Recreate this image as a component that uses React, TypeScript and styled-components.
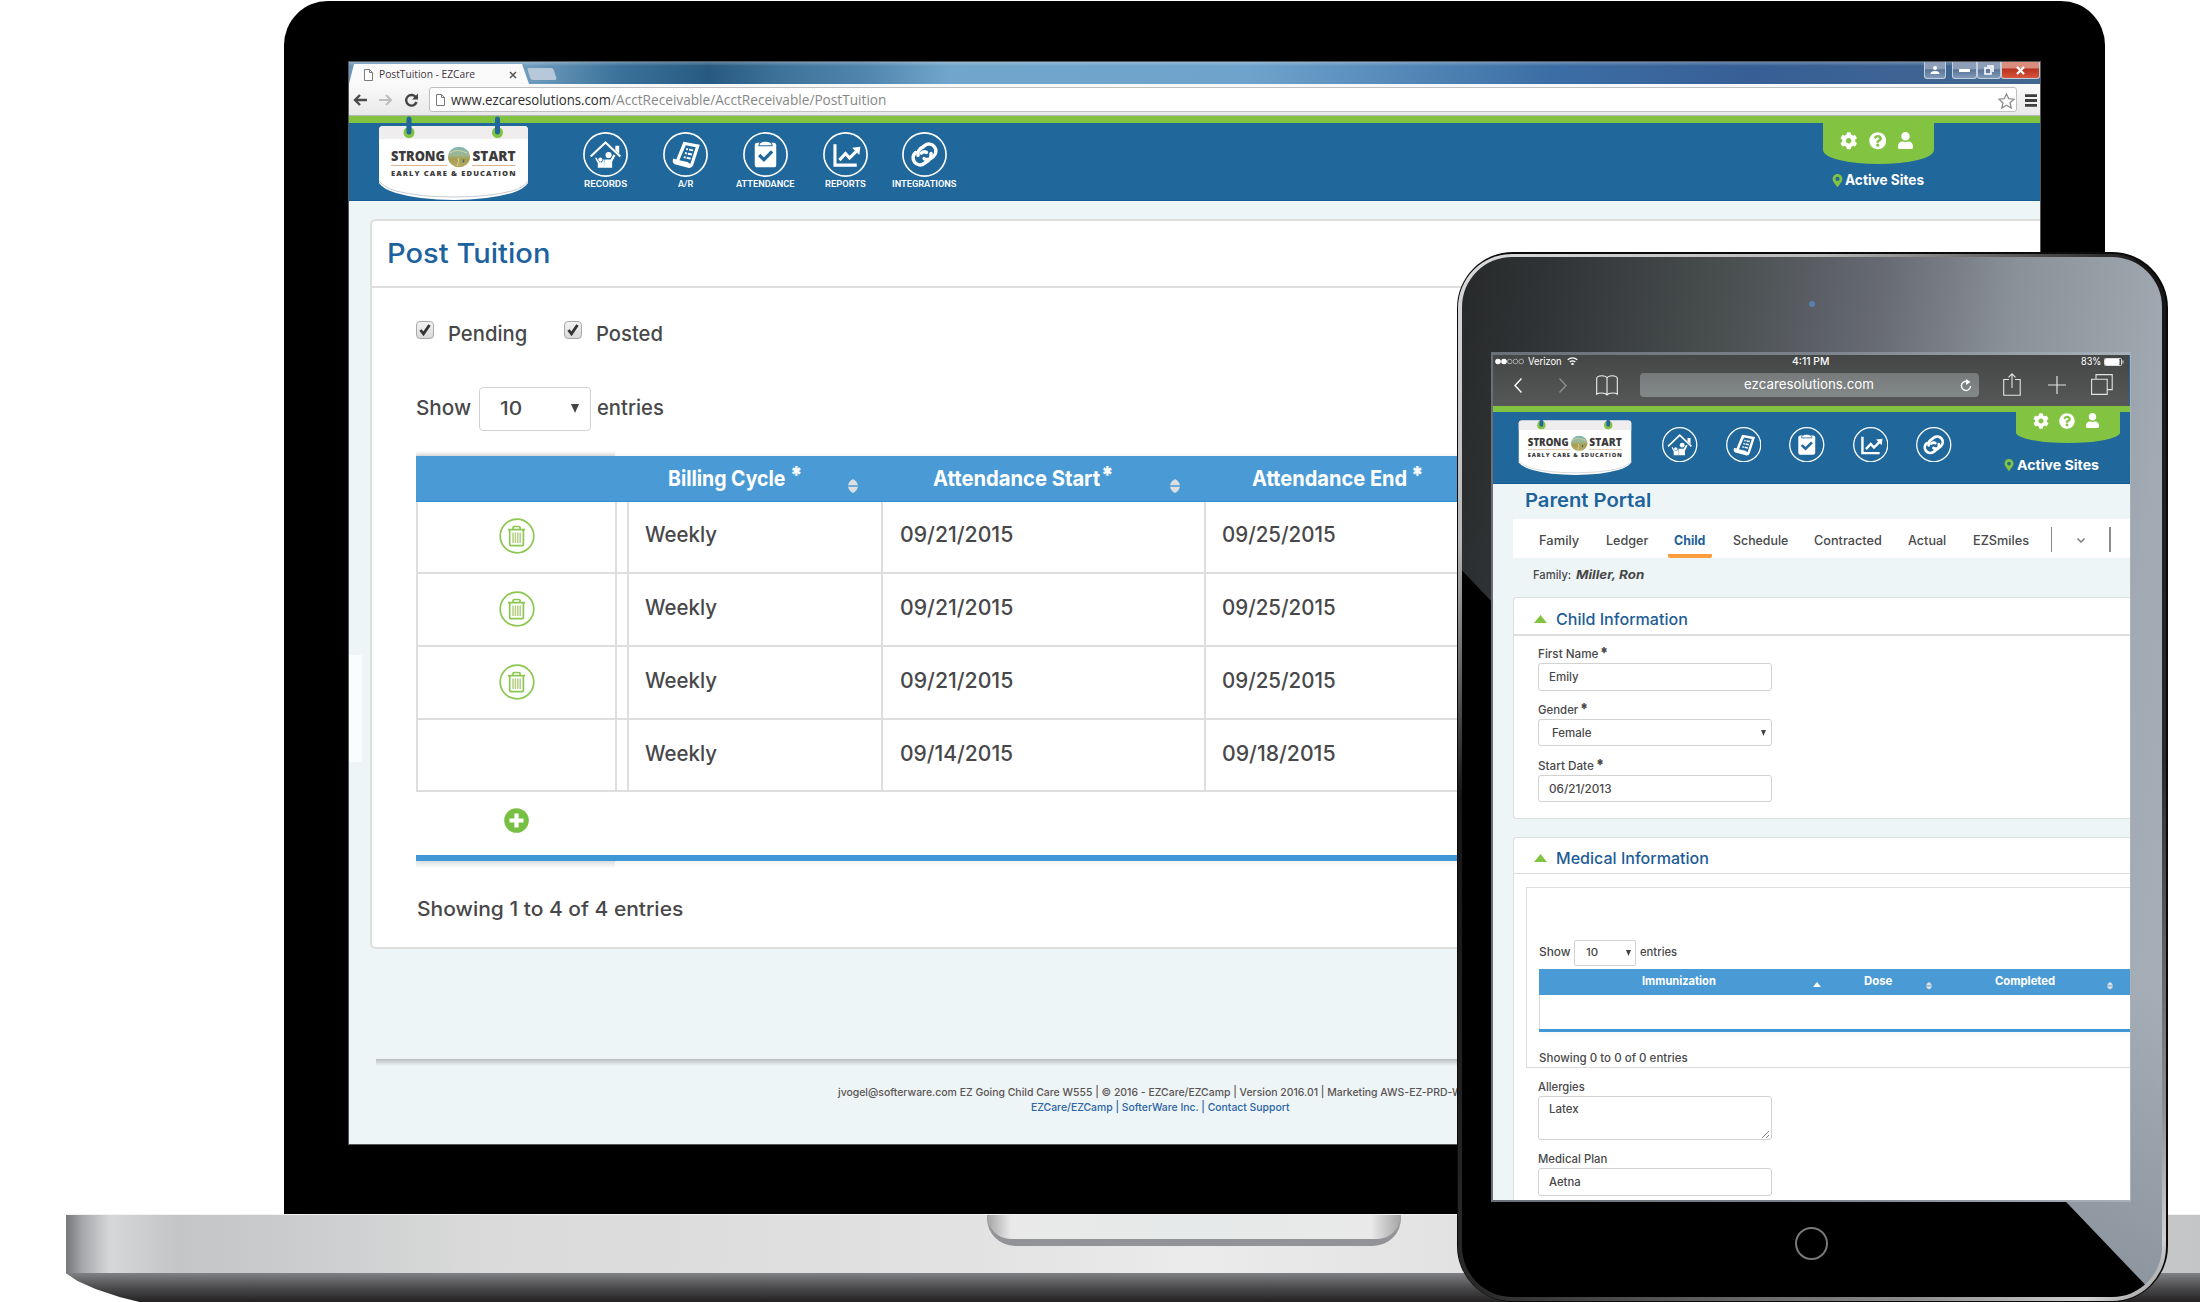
import React, { useLayoutEffect, useRef, useState } from "react";
import styled, { createGlobalStyle } from "styled-components";
import { FaCog, FaQuestionCircle, FaUser, FaMapMarkerAlt } from "react-icons/fa";

const blue = "#20679c";
const green = "#82c341";
const sky = "#4a9bd5";
const mist = "#eef5f6";
const ink = "#48484a";
const line = "#dededd";
const body = `Inter, "Open Sans", "Liberation Sans", sans-serif`;
const ui = `"Open Sans", sans-serif`;

const Global = createGlobalStyle`
  html, body { margin: 0; padding: 0; background: #fff; }
  * { box-sizing: border-box; }
  svg { display: block; flex: none; }
`;

/* ---------- text ---------- */

interface LabelProps {
  children: React.ReactNode;
  w: number;
  size: number;
  drop?: number;
  left?: number;
  weight?: number;
  color?: string;
  italic?: boolean;
  font?: string;
}

const LabelBox = styled.div<{ $w: number; $size: number; $drop: number; $left: number; $weight: number; $color: string; $italic: boolean; $font: string }>`
  flex: none;
  width: ${(p) => p.$w}px;
  height: ${(p) => p.$size}px;
  margin-top: ${(p) => p.$drop - p.$size * (p.$font === body ? 0.825 : 0.863)}px;
  margin-left: ${(p) => p.$left}px;
  font: ${(p) => (p.$italic ? "italic " : "")}${(p) => p.$weight} ${(p) => p.$size}px/${(p) => p.$size}px ${(p) => p.$font};
  color: ${(p) => p.$color};
  white-space: pre;
`;
const Stretch = styled.span`
  display: inline-block;
  transform-origin: 0 0;
  vertical-align: top;
`;

/* Text set to an exact width: `drop` is the baseline's distance from the row's top. */
function Label({ children, w, size, drop = 0, left = 0, weight = 500, color = ink, italic = false, font = body }: LabelProps) {
  const ref = useRef<HTMLSpanElement>(null);
  const [k, setK] = useState(1);
  useLayoutEffect(() => {
    if (ref.current && ref.current.offsetWidth) setK(w / ref.current.offsetWidth);
  }, [w, size, weight]);
  return (
    <LabelBox $w={w} $size={size} $drop={drop} $left={left} $weight={weight} $color={color} $italic={italic} $font={font}>
      <Stretch ref={ref} style={{ transform: `scaleX(${k})` }}>{children}</Stretch>
    </LabelBox>
  );
}

/* ---------- shared pieces ---------- */

const Row = styled.div<{ $h: number; $pl?: number }>`
  display: flex;
  flex: none;
  align-items: flex-start;
  height: ${(p) => p.$h}px;
  padding-left: ${(p) => p.$pl ?? 0}px;
`;
const Nudge = styled.div<{ $x?: number; $y?: number }>`
  flex: none;
  margin: ${(p) => p.$y ?? 0}px 0 0 ${(p) => p.$x ?? 0}px;
`;
const Rule = styled.div<{ $h: number; $color: string }>`
  flex: none;
  height: ${(p) => p.$h}px;
  background: ${(p) => p.$color};
`;

const Badge = ({ width, height, hook }: { width: number; height: number; hook: number }) => (
  <svg width={width} height={height} viewBox="0 0 151 84" preserveAspectRatio="none">
    <defs>
      <linearGradient id="ball" x1="0" y1="0" x2="0" y2="1">
        <stop offset="0" stopColor="#7fb4b5" />
        <stop offset=".4" stopColor="#9db894" />
        <stop offset=".6" stopColor="#a89d4e" />
        <stop offset="1" stopColor="#b7ab6b" />
      </linearGradient>
    </defs>
    <path d="M1 14q0-4 4-4h141q4 0 4 4v53q-4 6-16 10q-24 7-58 7t-58-7Q5 73 1 67z" fill="#fff" />
    <path d="M1 14q0-4 4-4h141q4 0 4 4v9H1z" fill="#efedee" />
    <path d="M1 65q6 7 17 10q24 6 58 6t58-6q11-3 16-10" fill="none" stroke="#c9ccd2" strokeWidth="1" />
    {[31, 119.5].map((x) => (
      <g key={x}>
        <circle cx={x} cy="16.500" r="5.500" fill={green} />
        <path d={`M${x} ${hook}V16`} stroke={blue} strokeWidth="5" strokeLinecap="round" />
      </g>
    ))}
    <g fontFamily={`"Open Sans", Lato, sans-serif`} fontWeight="800" fill="#3c3a3b">
      <text x="13" y="44.500" fontSize="13.800" textLength="54" lengthAdjust="spacingAndGlyphs">STRONG</text>
      <text x="94.500" y="44.500" fontSize="13.800" textLength="43" lengthAdjust="spacingAndGlyphs">START</text>
      <text x="13" y="59.500" fontSize="7.600" textLength="124.500" lengthAdjust="spacing">EARLY CARE &amp; EDUCATION</text>
    </g>
    <path d="M13 49.500h56M94 49.500h43.500" stroke="#dcb594" strokeWidth="1" />
    <ellipse cx="81" cy="41" rx="11" ry="10.300" fill="url(#ball)" />
    <path d="M72 37q7-5 17 0M79 50q3-5 1-8" fill="none" stroke="#d8d9a0" strokeWidth="1" />
    <path d="M85.500 43.500v3" stroke="#3d6c79" strokeWidth="1.500" />
  </svg>
);

type NavName = "records" | "ar" | "attendance" | "reports" | "integrations";
const glyphs: Record<NavName, React.ReactNode> = {
  records: (
    <>
      <path d="M7.500 24 22 10.200 36.500 24" fill="none" stroke="#fff" strokeWidth="2" />
      <path d="M31.600 13.500h3.800v7.800l-3.800-3.500z" />
      <circle cx="25" cy="22.500" r="3" />
      <path d="M21 27h6l2.800-5 1.900.9-3.200 6.300V35h-8z" />
      <circle cx="17" cy="27" r="2" />
      <path d="m11.800 25.500 1.200-.6 3 4.600h2.500l2-3.300v8.800h-6v-4.500z" />
    </>
  ),
  ar: (
    <>
      <path d="m20 9.500 16 3-6.500 20q-1.500 3.500-5 2.500l-13-3.500q-3-1.500-1.500-5.500l3 .8z" />
      <path d="m22.300 13 9.700 1.800-5.300 16.500-2.700-2-8-1.800z" fill={blue} />
      <path d="m22.700 16.600 1.800.4m1 .2 4 .8M21.500 20.600l1.800.4m1 .2 4 .8M20.300 24.600l1.800.4m1 .2 4 .8" stroke="#fff" strokeWidth="1.900" />
    </>
  ),
  attendance: (
    <>
      <rect x="11.500" y="10.500" width="21" height="24" rx="2.500" />
      <path d="M15.500 13.500q0-4 6.500-4.600 6.500.6 6.500 4.600z" stroke={blue} strokeWidth="1" />
      <path d="m15.800 22.500 4.700 4.500 8-8" fill="none" stroke={blue} strokeWidth="3.200" />
    </>
  ),
  reports: (
    <>
      <path d="M11.700 12v20.400H33" fill="none" stroke="#fff" strokeWidth="3" />
      <path d="m16 27.500 6-6.500 4 4.500 7-7" fill="none" stroke="#fff" strokeWidth="3" />
      <path d="M28.500 15.500 36.500 14.500 35.500 22.500z" />
    </>
  ),
  integrations: (
    <g fill="none" transform="translate(22 22) rotate(-38)" stroke="#fff" strokeWidth="3.400" strokeLinecap="round">
      <path d="M-5.500 -3.200A7.400 6.800 0 0 1 3 -6.800h2.500a6.800 6.800 0 0 1 0 13.600H2.500A6.300 6.300 0 0 1 -2.800 3" />
      <path d="M5.500 3.200A7.400 6.800 0 0 1 -3 6.800h-2.500a6.800 6.800 0 0 1 0 -13.600" />
      <path d="M2.800 -.5A4.500 4.500 0 0 0 -1.500 -3" />
    </g>
  ),
};
const NavIcon = ({ name, size }: { name: NavName; size: number }) => (
  <svg width={size} height={size} viewBox="0 0 44 44" fill="#fff">
    <circle cx="22" cy="22" r="21.100" fill="none" stroke="#fff" strokeWidth="1.600" />
    {glyphs[name]}
  </svg>
);

const UserTab = styled.div<{ $w: number; $h: number; $gap: number; $pt: number }>`
  display: flex;
  justify-content: center;
  align-items: flex-start;
  gap: ${(p) => p.$gap}px;
  width: ${(p) => p.$w}px;
  height: ${(p) => p.$h}px;
  padding: ${(p) => p.$pt}px 3px 0 0;
  background: ${green};
  border-radius: 0 0 50% 50% / 0 0 34% 34%;
  color: #fff;
`;

const Sorter = ({ w = 10, h = 14 }: { w?: number; h?: number }) => (
  <svg width={w} height={h} viewBox="0 0 9 14" preserveAspectRatio="none">
    <path d="M4.500 0Q8 2 9 6.300H0Q1 2 4.500 0zM0 7.700h9Q8 12 4.500 14 1 12 0 7.700z" fill="#dcdee0" />
  </svg>
);

const Box = styled.div<{ $w: number; $h: number; $r?: number; $b?: number }>`
  display: flex;
  flex: none;
  align-items: flex-start;
  width: ${(p) => p.$w}px;
  height: ${(p) => p.$h}px;
  border: ${(p) => p.$b ?? 1.5}px solid #d2d2d2;
  border-radius: ${(p) => p.$r ?? 4}px;
  background: #fff;
`;

/* ---------- laptop ---------- */

const Stage = styled.div`
  position: relative;
  width: 2200px;
  height: 1302px;
  overflow: hidden;
  background: #fff;
`;
const Lid = styled.div`
  position: absolute;
  left: 284px;
  top: 1px;
  width: 1821px;
  height: 1213px;
  padding: 61px 65px 70px;
  background: #000;
  border-radius: 44px 44px 0 0;
`;
const Screen = styled.div`
  display: flex;
  flex-direction: column;
  width: 1691px;
  height: 1082px;
  overflow: hidden;
  background: ${mist};
  box-shadow: 0 0 0 1px #55585a;
`;
const Base = styled.div`
  position: absolute;
  left: 65.5px;
  top: 1214px;
  width: 2135px;
`;
const Deck = styled.div`
  display: flex;
  height: 59px;
  padding-left: 921px;
  border-top: 1px solid #f2f2f2;
  background: linear-gradient(90deg, #77777c 0, #a9abae 18px, #d6d7d9 44px, #c4c5c7 110px, #c9cacc 200px, #d9dad9 420px, #dddddd 640px, #e2e2e3 900px, #ebebeb 1130px, #e2e2e2 1400px, #d0d0d2 1800px, #c4c5c7 2134px);
`;
const Notch = styled.div`
  width: 414px;
  height: 31px;
  padding-bottom: 7px;
  background: #929397;
  border-radius: 0 0 28px 28px;
`;
const NotchFace = styled.div`
  height: 24px;
  border-radius: 0 0 24px 24px;
  background: linear-gradient(90deg, #a4a4a6 0, #e9e9e9 24px, #e6e9e9 50%, #e9e9e9 384px, #a4a4a6 100%);
`;
const Underside = styled.div`
  height: 30px;
  background: linear-gradient(#808184, #4a4a4c 50%, #211f20);
  clip-path: polygon(0 0, 12px 8px, 30px 16px, 54px 24px, 78px 30px, 100% 30px, 100% 0);
`;

const TitleBar = styled.div`
  display: flex;
  flex: none;
  height: 22px;
  background:
    linear-gradient(180deg, rgba(255, 255, 255, 0.25) 0, rgba(255, 255, 255, 0) 4px),
    linear-gradient(90deg, #6c94b6 0, #6f9cbd 180px, #3b729a 270px, #285a81 360px, #3f7299 430px, #5286ae 520px, #72a5cb 600px, #6fa3cb 900px, #3c6ea5 1200px, #375f96 1400px, #42688f 1691px);
`;
const BrowserTab = styled.div`
  display: flex;
  align-items: flex-start;
  width: 180px;
  height: 20px;
  margin-top: 2px;
  background: #fafafa;
  clip-path: polygon(5px 0, 173px 0, 180px 100%, 0 100%);
`;
const NewTab = styled.div`
  width: 26px;
  height: 12px;
  margin: 6px 0 0 0;
  background: #b7c8da;
  transform: skewX(18deg);
  border-radius: 2px;
`;
const WinButtons = styled.div`
  display: flex;
  margin-left: auto;
`;
const WinButton = styled.div<{ $w: number; $red?: boolean; $ml?: number }>`
  display: flex;
  justify-content: center;
  align-items: center;
  width: ${(p) => p.$w}px;
  height: 17px;
  margin-left: ${(p) => p.$ml ?? 0}px;
  border: 1px solid #c3cedb;
  border-top: 0;
  border-radius: 0 0 3px 3px;
  background: ${(p) => (p.$red ? "linear-gradient(#d98d7c 0 35%, #b93320 45%, #d8563c)" : "linear-gradient(#8d9fb8 0 40%, #5b7597 50%, #7f9abb)")};
`;
const ToolBar = styled.div`
  display: flex;
  flex: none;
  align-items: flex-start;
  height: 32px;
  background: linear-gradient(#fafafa, #e9e9e9);
  border-bottom: 1px solid #b5b5b5;
`;
const UrlBox = styled.div`
  display: flex;
  width: 1588px;
  height: 25px;
  margin: 3px 0 0 10px;
  border: 1px solid #bfbfbf;
  border-radius: 3px;
  background: #fff;
`;
const Header = styled.div<{ $h: number }>`
  display: flex;
  flex: none;
  height: ${(p) => p.$h}px;
  background: ${blue};
  border-bottom: 1px solid #125b93;
`;
const NavItem = styled.div<{ $w: number }>`
  display: flex;
  flex: none;
  flex-direction: column;
  align-items: center;
  width: ${(p) => p.$w}px;
`;
const Account = styled.div<{ $w: number; $x: number }>`
  display: flex;
  flex-direction: column;
  width: ${(p) => p.$w}px;
  margin-left: ${(p) => p.$x}px;
`;
const Card = styled.div<{ $h: number }>`
  flex: none;
  height: ${(p) => p.$h}px;
  border: 2px solid ${line};
  border-right: 0;
  border-radius: 6px 0 0 6px;
  background: #fff;
`;
const DeskPage = styled.div`
  position: relative;
  flex: 1;
  padding: 18px 0 0 21px;
  &::before {
    content: "";
    position: absolute;
    left: 0;
    top: 454px;
    width: 13px;
    height: 107px;
    background: #fafdfd;
  }
`;
const Check = styled.div`
  display: flex;
  align-items: center;
  justify-content: center;
  width: 18px;
  height: 18px;
  border: 1px solid #a9a9a9;
  border-radius: 4px;
  background: linear-gradient(#f3f3f3, #d9d9d9);
`;
const Grid = styled.div`
  margin-left: 44px;
`;
const HeadRow = styled.div`
  display: flex;
  height: 45.5px;
  background: ${sky};
  border-bottom: 1px solid #2f8fd4;
  box-shadow: 0 -3px 3px -1px rgba(0, 0, 0, 0.04);
`;
const HeadShade = styled.div`
  width: 199px;
  height: 5px;
  margin: -5px 0 0 44px;
  background: linear-gradient(rgba(0, 0, 0, 0), rgba(0, 0, 0, 0.12));
`;
const FootShade = styled.div`
  width: 199px;
  height: 8px;
  background: linear-gradient(rgba(60, 80, 100, 0.13), rgba(0, 0, 0, 0));
`;
const BodyRow = styled.div<{ $h: number }>`
  display: grid;
  grid-template-columns: 198.5px 12.5px 254px 322.5px 1fr;
  height: ${(p) => p.$h}px;
  border-bottom: 2px solid ${line};
`;
const Cell = styled.div`
  display: flex;
  align-items: flex-start;
  border-left: 2px solid ${line};
`;
const BlueLine = styled.div<{ $h: number }>`
  height: ${(p) => p.$h}px;
  background: #3f97d6;
  box-shadow: 0 3px 4px rgba(60, 80, 100, 0.07);
`;
const FootRule = styled.div`
  height: 7px;
  margin: 110px 0 0 6px;
  background: linear-gradient(#b9bdbe, ${mist});
`;

const Trash = () => (
  <svg width="36" height="36" viewBox="0 0 36 36" fill="none" stroke="#8cc751" strokeWidth="1.700">
    <circle cx="18" cy="18" r="16.800" />
    <path d="M9 11.700h17M14 11v-1.200q0-1.300 1.300-1.300h4.500q1.300 0 1.300 1.300V11M10.700 12.500V26q0 1.700 1.700 1.700h10.300q1.700 0 1.700-1.700V12.500" />
    <path d="M14 14.500v10.500M16.400 14.500v10.500M18.800 14.500v10.500M21.200 14.500v10.500" stroke="#b5cf83" strokeWidth="1.500" />
  </svg>
);
const PageIcon = () => (
  <svg width="9" height="12" viewBox="0 0 9 12" fill="#fff" stroke="#7b7b7b">
    <path d="M.5.5h5l3 3v8h-8zM5.500.5v3h3" />
  </svg>
);
const Tick = () => (
  <Check>
    <svg width="12" height="12" viewBox="0 0 12 12" fill="none" stroke="#333" strokeWidth="2.800"><path d="m1.500 6 3 3.800L10.500 1" /></svg>
  </Check>
);

const deskNav: { name: NavName; text: string; w: number }[] = [
  { name: "records", text: "RECORDS", w: 43 },
  { name: "ar", text: "A/R", w: 15.5 },
  { name: "attendance", text: "ATTENDANCE", w: 58.5 },
  { name: "reports", text: "REPORTS", w: 40.5 },
  { name: "integrations", text: "INTEGRATIONS", w: 65 },
];
const rows = [
  { h: 72, drop: 40.5, start: "09/21/2015", end: "09/25/2015", trash: true },
  { h: 73, drop: 41.5, start: "09/21/2015", end: "09/25/2015", trash: true },
  { h: 73, drop: 41.5, start: "09/21/2015", end: "09/25/2015", trash: true },
  { h: 72.5, drop: 41.5, start: "09/14/2015", end: "09/18/2015", trash: false },
];

function Laptop() {
  return (
    <>
      <Lid>
        <Screen>
          <TitleBar>
            <BrowserTab>
              <Nudge $x={15} $y={5}><PageIcon /></Nudge>
              <Label w={96} size={11.5} drop={14} left={5.5} weight={400} color="#41353a" font={ui}>PostTuition - EZCare</Label>
              <Nudge $x={34} $y={7}>
                <svg width="8" height="8" viewBox="0 0 8 8" stroke="#555" strokeWidth="1.500"><path d="m1 1 6 6M7 1 1 7" /></svg>
              </Nudge>
            </BrowserTab>
            <NewTab />
            <WinButtons>
              <WinButton $w={22}>
                <svg width="12" height="10" viewBox="0 0 12 10" fill="#fff"><circle cx="6" cy="3" r="2" /><path d="M1.500 9q0-3 4.500-3t4.500 3z" /></svg>
              </WinButton>
              <WinButton $w={25} $ml={6}><svg width="11" height="4"><rect y="1" width="11" height="3" fill="#fff" /></svg></WinButton>
              <WinButton $w={24}>
                <svg width="10" height="10" viewBox="0 0 10 10" fill="none" stroke="#fff" strokeWidth="1.600"><path d="M1 3h6v6H1zM3 1h6v6" /></svg>
              </WinButton>
              <WinButton $w={39} $red>
                <svg width="9" height="9" viewBox="0 0 9 9" stroke="#fff" strokeWidth="2.300"><path d="m1 1 7 7M8 1 1 8" /></svg>
              </WinButton>
            </WinButtons>
          </TitleBar>
          <ToolBar>
            <Nudge $x={4} $y={10}>
              <svg width="14" height="12" viewBox="0 0 14 12" fill="none" stroke="#4a4a4a" strokeWidth="2.400"><path d="M14 6H2M7 1 2 6l5 5" /></svg>
            </Nudge>
            <Nudge $x={12} $y={10}>
              <svg width="14" height="12" viewBox="0 0 14 12" fill="none" stroke="#bdbdbd" strokeWidth="2"><path d="M0 6h12M7 1l5 5-5 5" /></svg>
            </Nudge>
            <Nudge $x={11} $y={9}>
              <svg width="15" height="14" viewBox="0 0 15 14" fill="none" stroke="#444" strokeWidth="2.400"><path d="M12 4.500A5.300 5.300 0 1 0 12.500 9" /><path d="M14 .5v6H8z" fill="#444" stroke="none" /></svg>
            </Nudge>
            <UrlBox>
              <Nudge $x={6} $y={6}><PageIcon /></Nudge>
              <Label w={160} size={14} drop={17.5} left={6} weight={400} color="#2d2d2d" font={ui}>www.ezcaresolutions.com</Label>
              <Label w={275} size={14} drop={17.5} weight={400} color="#878787" font={ui}>/AcctReceivable/AcctReceivable/PostTuition</Label>
              <Nudge $x={1112} $y={4.5}>
                <svg width="17" height="16" viewBox="0 0 17 16" fill="#fff" stroke="#8d8d8d" strokeWidth="1.300"><path d="m8.500 1 2.200 4.700 5.300.5-4 3.500 1.200 5.300-4.700-2.800L3.800 15 5 9.700 1 6.200l5.300-.5z" /></svg>
              </Nudge>
            </UrlBox>
            <Nudge $x={8} $y={9.5}>
              <svg width="12" height="13" stroke="#3e3e3e" strokeWidth="2.800"><path d="M0 1.700h12M0 6.500h12M0 11.300h12" /></svg>
            </Nudge>
          </ToolBar>
          <Rule $h={7} $color={green} />
          <Header $h={78}>
            <Nudge $x={28.5} $y={-7}><Badge width={151} height={84} hook={3} /></Nudge>
            <Nudge $x={37.5} />
            {deskNav.map((n) => (
              <NavItem key={n.name} $w={79.75}>
                <Nudge $y={8.5}><NavIcon name={n.name} size={45} /></Nudge>
                <Label w={n.w} size={8.8} drop={11} weight={600} color="#fff" font={`Roboto, sans-serif`}>{n.text}</Label>
              </NavItem>
            ))}
            <Account $w={111.5} $x={858}>
              <UserTab $w={111.5} $h={41} $gap={11} $pt={9}>
                <FaCog size={17.5} /><FaQuestionCircle size={17.5} /><FaUser size={17} />
              </UserTab>
              <Row $h={20} $pl={8.5}>
                <Nudge $y={9.5}><FaMapMarkerAlt size={13} color={green} /></Nudge>
                <Label w={79} size={14.5} drop={21} left={0.5} weight={700} color="#fff">Active Sites</Label>
              </Row>
            </Account>
          </Header>
          <DeskPage>
            <Card $h={730}>
              <Row $h={64.5} $pl={15}>
                <Label w={163} size={27.5} drop={42} weight={500} color="#1b629e">Post Tuition</Label>
              </Row>
              <Rule $h={2} $color={line} />
              <Row $h={99} $pl={44}>
                <Nudge $y={33.5}><Tick /></Nudge>
                <Label w={79} size={20.5} drop={53} left={14}>Pending</Label>
                <Nudge $x={36.5} $y={33.5}><Tick /></Nudge>
                <Label w={67} size={20.5} drop={53} left={14.5}>Posted</Label>
              </Row>
              <Row $h={69.5} $pl={44}>
                <Label w={55.5} size={20.5} drop={28.5}>Show</Label>
                <Nudge $x={7} $y={0.5}>
                  <Box $w={112} $h={44}>
                    <Label w={22} size={18} drop={27} left={20}>10</Label>
                    <Nudge $x={49.5} $y={16}><svg width="8" height="9"><path d="M0 0h8L4 9z" fill="#444" /></svg></Nudge>
                  </Box>
                </Nudge>
                <Label w={67} size={20.5} drop={28.5} left={6}>entries</Label>
              </Row>
              <HeadShade />
              <Grid>
                <HeadRow>
                  <Label w={117} size={22} drop={29} left={252} weight={700} color="#fff">Billing Cycle</Label>
                  <Label w={13} size={24} drop={27.5} left={4.5} weight={900} color="#fff">*</Label>
                  <Nudge $x={45} $y={23}><Sorter /></Nudge>
                  <Label w={167} size={22} drop={29} left={75} weight={700} color="#fff">Attendance Start</Label>
                  <Label w={13} size={24} drop={27.5} left={1.5} weight={900} color="#fff">*</Label>
                  <Nudge $x={55.5} $y={23}><Sorter /></Nudge>
                  <Label w={155} size={22} drop={29} left={72} weight={700} color="#fff">Attendance End</Label>
                  <Label w={13} size={24} drop={27.5} left={4} weight={900} color="#fff">*</Label>
                </HeadRow>
                {rows.map((r, i) => (
                  <BodyRow key={i} $h={r.h}>
                    <Cell>{r.trash && <Nudge $x={81} $y={r.drop - 24.5}><Trash /></Nudge>}</Cell>
                    <Cell />
                    <Cell><Label w={72} size={21.3} drop={r.drop} left={16}>Weekly</Label></Cell>
                    <Cell><Label w={113.5} size={21.3} drop={r.drop} left={17}>{r.start}</Label></Cell>
                    <Cell><Label w={113.5} size={21.3} drop={r.drop} left={16.5}>{r.end}</Label></Cell>
                  </BodyRow>
                ))}
                <Row $h={62.5} $pl={87.5}>
                  <Nudge $y={16}>
                    <svg width="25" height="25" viewBox="0 0 25 25"><circle cx="12.500" cy="12.500" r="12.300" fill="#77c043" /><path d="M12.500 5.500v14M5.500 12.500h14" stroke="#fff" strokeWidth="4.200" /></svg>
                  </Nudge>
                </Row>
                <BlueLine $h={6} />
                <FootShade />
                <Row $h={62}>
                  <Label w={266.5} size={20} drop={46.5} left={0.5}>Showing 1 to 4 of 4 entries</Label>
                </Row>
              </Grid>
            </Card>
            <FootRule />
            <Row $h={31} $pl={468}>
              <Label w={624} size={11} drop={30.5} color="#5a5455">jvogel@softerware.com EZ Going Child Care W555 | © 2016 - EZCare/EZCamp | Version 2016.01 | Marketing AWS-EZ-PRD-W</Label>
            </Row>
            <Row $h={20} $pl={661}>
              <Label w={258} size={11} drop={14.5} color="#2c64a5">EZCare/EZCamp | SofterWare Inc. | Contact Support</Label>
            </Row>
          </DeskPage>
        </Screen>
      </Lid>
      <Base>
        <Deck><Notch><NotchFace /></Notch></Deck>
        <Underside />
      </Base>
    </>
  );
}

/* ---------- tablet ---------- */

const Shell = styled.div`
  position: absolute;
  left: 1456.5px;
  top: 252px;
  width: 711px;
  height: 1050px;
  padding: 1.5px;
  border-radius: 56px;
  background: #0a0a0a;
`;
const Rim = styled.div`
  height: 100%;
  padding: 3px 4.5px 3.5px 4px;
  border-radius: 54px;
  background: linear-gradient(142deg, #dcdcdc 0, #b9b9b9 18%, #151515 34%, #2a2a2a 66%, #8f8f8f 88%, #d0d0d0 96%, #999 100%);
`;
const Glass = styled.div`
  position: relative;
  isolation: isolate;
  height: 100%;
  padding: 95.5px 0 0 29px;
  border-radius: 50px;
  overflow: hidden;
  background: linear-gradient(98deg, #27292a 0, #303335 10%, #4a4f50 32%, #676a73 50%, #8a9198 66%, #a1a9b2 85%, #a8b1bb 100%);
  &::before {
    content: "";
    position: absolute;
    inset: 0;
    z-index: -1;
    background: linear-gradient(transparent 70%, rgba(90, 97, 105, 0.35));
  }
  &::after {
    content: "";
    position: absolute;
    inset: 0;
    z-index: -1;
    background: #000;
    clip-path: polygon(0 314px, 683px 1028px, 695px 100%, 0 100%);
  }
`;
const Bezel = styled.div`
  width: 640px;
  height: 850px;
  padding: 3px 1.5px 2px 2px;
  background: linear-gradient(90deg, #6b6f78, #7c828b 50%, #a9b2bb);
`;
const Pane = styled.div`
  display: flex;
  flex-direction: column;
  width: 636.5px;
  height: 845px;
  overflow: hidden;
  background: ${mist};
`;
const SafariBar = styled.div`
  flex: none;
  height: 50.5px;
  background: linear-gradient(#454646, #565757);
  border-right: 1.5px solid ${blue};
`;
const Address = styled.div`
  display: flex;
  width: 338.5px;
  height: 24px;
  border-radius: 4px;
  background: linear-gradient(#777a7a, #838888);
`;
const TabStrip = styled.div`
  display: flex;
  flex: none;
  height: 39.5px;
  margin-left: 20px;
  background: #fff;
`;
const ActiveTab = styled.div`
  display: flex;
  width: 44px;
  height: 39px;
  padding-left: 6px;
  border-bottom: 4px solid #fb9d3c;
  border-radius: 0 0 2px 2px;
`;
const Divider = styled.div`
  width: 1.5px;
  height: 25px;
  margin-top: 8px;
  background: #8a8a8a;
`;
const Sheet = styled.div<{ $h: number }>`
  flex: none;
  height: ${(p) => p.$h}px;
  margin-left: 20px;
  border: 1.5px solid ${line};
  border-right: 0;
  border-radius: 4px 0 0 4px;
  background: #fff;
`;
const Immun = styled.div`
  height: 181px;
  margin: 13px 0 0 11.5px;
  border: 1px solid ${line};
  border-right: 0;
`;
const ImmunHead = styled.div`
  display: flex;
  height: 25.5px;
  margin-left: 12px;
  background: ${sky};
`;
const ImmunBody = styled.div`
  height: 34px;
  margin-left: 12px;
  border-left: 1px solid #d6dadd;
`;

const Up = ({ w = 13, h = 8, color = green }: { w?: number; h?: number; color?: string }) => (
  <svg width={w} height={h} viewBox="0 0 13 8" preserveAspectRatio="none"><path d="M6.500 0 13 8H0z" fill={color} /></svg>
);

interface FieldProps {
  label: string;
  lw: number;
  value: string;
  vw: number;
  star?: boolean;
  select?: boolean;
  h?: number;
  gap: number;
}
const Field = ({ label, lw, value, vw, star, select, h = 27.5, gap }: FieldProps) => (
  <>
    <Row $h={gap} $pl={24}>
      <Label w={lw} size={11.7} drop={gap - 4.3}>{label}</Label>
      {star && <Label w={8} size={15} drop={gap - 5.5} left={1.5} weight={900}>*</Label>}
    </Row>
    <Row $h={h} $pl={24}>
      <Box $w={233.5} $h={h} $r={3}>
        <Label w={vw} size={11.5} drop={h > 30 ? 17 : 17.5} left={select ? 13 : 10} weight={500}>{value}</Label>
        {select && <Nudge $x={168.5} $y={10.5}><svg width="5" height="6"><path d="M0 0h5L2.500 6z" fill="#444" /></svg></Nudge>}
        {h > 30 && <Nudge $x={183} $y={34}><svg width="7" height="7" stroke="#888"><path d="M0 7 7 0M4 7l3-3" /></svg></Nudge>}
      </Box>
    </Row>
  </>
);

const tabletNav: NavName[] = ["records", "ar", "attendance", "reports", "integrations"];
const portalTabs = [
  { text: "Schedule", w: 55, left: 20.5 },
  { text: "Contracted", w: 67.5, left: 26.5 },
  { text: "Actual", w: 38, left: 26.5 },
  { text: "EZSmiles", w: 56.5, left: 27 },
];
const Camera = styled.div`
  position: absolute;
  left: 346.5px;
  top: 44px;
  width: 6px;
  height: 6px;
  border-radius: 50%;
  background: #5c7fb1;
`;
const Home = styled.div`
  width: 33px;
  height: 33px;
  margin: 24.5px 0 0 304px;
  border: 2px solid #77787a;
  border-radius: 50%;
`;
const Dots = () => (
  <svg width="30" height="7" viewBox="0 0 30 7" fill="#fff">
    <circle cx="3" cy="3.500" r="2.800" /><circle cx="9" cy="3.500" r="2.800" />
    <g fill="none" stroke="#b5b5b5" strokeWidth=".9"><circle cx="14.800" cy="3.500" r="2.300" /><circle cx="20.500" cy="3.500" r="2.300" /><circle cx="26.200" cy="3.500" r="2.300" /></g>
  </svg>
);

function Tablet() {
  return (
    <Shell>
      <Rim>
        <Glass>
          <Camera />
          <Bezel>
            <Pane>
              <SafariBar>
                <Row $h={18} $pl={1.5}>
                  <Nudge $y={3}><Dots /></Nudge>
                  <Label w={34} size={10.5} drop={10.5} left={3} weight={400} color="#fff">Verizon</Label>
                  <Nudge $x={5} $y={2}>
                    <svg width="11" height="8" viewBox="0 0 11 8" fill="none" stroke="#fff" strokeWidth="1.300"><path d="M.7 2.700q4.800-3.800 9.600 0M2.700 5q2.800-2.300 5.600 0" /><circle cx="5.500" cy="7" r=".6" /></svg>
                  </Nudge>
                  <Label w={37.5} size={10.5} drop={10.5} left={214.5} weight={500} color="#fff">4:11 PM</Label>
                  <Label w={20} size={10.5} drop={10.5} left={251} weight={400} color="#fff">83%</Label>
                  <Nudge $x={3} $y={2.5}>
                    <svg width="20" height="8" viewBox="0 0 20 8" fill="none" stroke="#ddd" strokeWidth="1"><rect x=".5" y=".5" width="17" height="7" rx="1" /><path d="M1.500 1.500h13.500v5H1.500z" fill="#fff" stroke="#fff" /><path d="M19 2.500v3" /></svg>
                  </Nudge>
                </Row>
                <Row $h={32} $pl={21}>
                  <Nudge $y={5}><svg width="8" height="15" viewBox="0 0 8 15" fill="none" stroke="#fff" strokeWidth="1.400"><path d="M7.500.5 1 7.500l6.500 7" /></svg></Nudge>
                  <Nudge $x={37} $y={5}><svg width="8" height="15" viewBox="0 0 8 15" fill="none" stroke="#8e8e8e" strokeWidth="1.400"><path d="m.5.5 6.500 7-6.500 7" /></svg></Nudge>
                  <Nudge $x={28.5} $y={2}>
                    <svg width="22" height="21" viewBox="0 0 22 21" fill="none" stroke="#eee" strokeWidth="1.100"><path d="M11 3Q10 .7 5.800.7T.7 3v16q1-1 5-1t5.300 2q1.300-2 5.300-2t5 1V3Q20.300.7 16.200.7T11 3v17" /></svg>
                  </Nudge>
                  <Nudge $x={22.5}>
                    <Address>
                      <Label w={130} size={13.6} drop={16.5} left={103.5} weight={400} color="#fff">ezcaresolutions.com</Label>
                      <Nudge $x={86.5} $y={6}>
                        <svg width="12" height="13" viewBox="0 0 12 13" fill="none" stroke="#fff" strokeWidth="1.400"><path d="M8.500 3A4.600 4.600 0 1 0 10.600 7" /><path d="M6 0l4.500 3L6 6z" fill="#fff" stroke="none" /></svg>
                      </Nudge>
                    </Address>
                  </Nudge>
                  <Nudge $x={24.5}>
                    <svg width="18" height="23" viewBox="0 0 18 23" fill="none" stroke="#e3e3e3" strokeWidth="1.100"><path d="M6 6.500H.7v15.800h16.500V6.500H12M9 15V1M5.500 4.300 9 .8l3.500 3.500" /></svg>
                  </Nudge>
                  <Nudge $x={26.5} $y={3}><svg width="18" height="18" stroke="#e3e3e3" strokeWidth="1.200"><path d="M9 0v18M0 9h18" /></svg></Nudge>
                  <Nudge $x={25.5} $y={1}>
                    <svg width="22" height="21" viewBox="0 0 22 21" fill="none" stroke="#e3e3e3" strokeWidth="1.100"><path d="M.6 5.200h15.600v15.200H.6zM5 5V.6h16.200v15H16.500" /></svg>
                  </Nudge>
                </Row>
              </SafariBar>
              <Rule $h={6} $color={green} />
              <Header $h={72}>
                <Nudge $x={24.5} $y={1.5}><Badge width={114} height={62} hook={11.5} /></Nudge>
                <Nudge $x={17} />
                {tabletNav.map((n) => (
                  <NavItem key={n} $w={63.4}><Nudge $y={15}><NavIcon name={n} size={35.5} /></Nudge></NavItem>
                ))}
                <Account $w={103.5} $x={51}>
                  <UserTab $w={103.5} $h={31} $gap={10} $pt={1.5}>
                    <FaCog size={16} /><FaQuestionCircle size={16} /><FaUser size={15} />
                  </UserTab>
                  <Row $h={20}>
                    <Nudge $x={-13} $y={16.5}><FaMapMarkerAlt size={12} color={green} /></Nudge>
                    <Label w={81.5} size={13} drop={27} left={2} weight={700} color="#fff">Active Sites</Label>
                  </Row>
                </Account>
              </Header>
              <Row $h={35} $pl={32}>
                <Label w={126.5} size={19} drop={23.5} weight={600} color="#1d639c">Parent Portal</Label>
              </Row>
              <TabStrip>
                <Label w={40} size={12.6} drop={27} left={26}>Family</Label>
                <Label w={42} size={12.6} drop={27} left={27}>Ledger</Label>
                <Nudge $x={20} />
                <ActiveTab><Label w={31.5} size={12.6} drop={27} weight={700} color="#1f5f99">Child</Label></ActiveTab>
                {portalTabs.map((t) => (
                  <Label key={t.text} w={t.w} size={12.6} drop={27} left={t.left}>{t.text}</Label>
                ))}
                <Nudge $x={21} /><Divider />
                <Nudge $x={25} $y={19}><svg width="8" height="5" viewBox="0 0 8 5" fill="none" stroke="#777" strokeWidth="1.400"><path d="m.5.5 3.500 3.500L7.500.5" /></svg></Nudge>
                <Nudge $x={24} /><Divider />
              </TabStrip>
              <Row $h={39} $pl={40}>
                <Label w={38} size={11.8} drop={21.5}>Family:</Label>
                <Label w={68} size={11.8} drop={21.5} left={5} weight={700} italic>Miller, Ron</Label>
              </Row>
              <Sheet $h={222}>
                <Row $h={36} $pl={20}>
                  <Nudge $y={16.5}><Up /></Nudge>
                  <Label w={131.5} size={16} drop={26} left={8.5} color="#1d5c96">Child Information</Label>
                </Row>
                <Rule $h={1.5} $color={line} />
                <Field label="First Name" lw={60} value="Emily" vw={30} star gap={27.5} />
                <Field label="Gender" lw={40} value="Female" vw={40} star select gap={28.3} />
                <Field label="Start Date" lw={56} value="06/21/2013" vw={63} star gap={28.3} />
              </Sheet>
              <Row $h={17.5} />
              <Sheet $h={400}>
                <Row $h={35} $pl={20}>
                  <Nudge $y={16}><Up /></Nudge>
                  <Label w={152.5} size={16} drop={26} left={8.5} color="#1d5c96">Medical Information</Label>
                </Row>
                <Rule $h={1.5} $color={line} />
                <Immun>
                  <Row $h={81} $pl={12}>
                    <Label w={31.5} size={11.7} drop={69}>Show</Label>
                    <Nudge $x={4} $y={51.5}>
                      <Box $w={62} $h={26.5} $r={2}>
                        <Label w={12} size={10.5} drop={16.5} left={11}>10</Label>
                        <Nudge $x={27.5} $y={9}><svg width="5" height="6"><path d="M0 0h5L2.500 6z" fill="#444" /></svg></Nudge>
                      </Box>
                    </Nudge>
                    <Label w={37.5} size={11.7} drop={69} left={3.5}>entries</Label>
                  </Row>
                  <ImmunHead>
                    <Label w={74} size={12} drop={16} left={103} weight={700} color="#fff">Immunization</Label>
                    <Nudge $x={97} $y={13}><Up w={8} h={5} color="#fff" /></Nudge>
                    <Label w={28.5} size={12} drop={16} left={43.5} weight={700} color="#fff">Dose</Label>
                    <Nudge $x={33} $y={13}><Sorter w={6} h={7.5} /></Nudge>
                    <Label w={60} size={12} drop={16} left={63.5} weight={700} color="#fff">Completed</Label>
                    <Nudge $x={52} $y={13}><Sorter w={6} h={7.5} /></Nudge>
                  </ImmunHead>
                  <ImmunBody />
                  <Nudge $x={12}><BlueLine $h={3} /></Nudge>
                  <Row $h={36} $pl={12}>
                    <Label w={149} size={11.7} drop={31.5}>Showing 0 to 0 of 0 entries</Label>
                  </Row>
                </Immun>
                <Field label="Allergies" lw={47} value="Latex" vw={30} gap={27.5} h={44.5} />
                <Field label="Medical Plan" lw={69} value="Aetna" vw={31.5} gap={28} />
              </Sheet>
            </Pane>
          </Bezel>
          <Home />
        </Glass>
      </Rim>
    </Shell>
  );
}

export default function App() {
  return (
    <Stage>
      <Global />
      <Laptop />
      <Tablet />
    </Stage>
  );
}
